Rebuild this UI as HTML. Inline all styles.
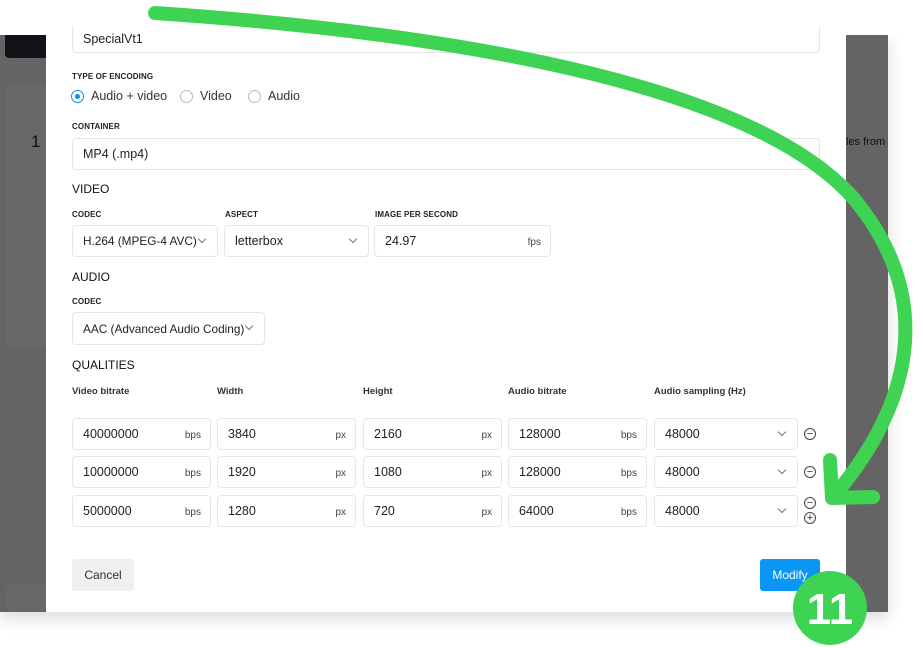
<!DOCTYPE html>
<html><head><meta charset="utf-8"><style>
*{box-sizing:border-box;margin:0;padding:0}
body{width:923px;height:648px;position:relative;overflow:hidden;background:#fff;font-family:"Liberation Sans",Arial,sans-serif;color:#1a1a1a}
.a{position:absolute}
.gray{left:0;top:35px;width:888px;height:577px;background:#646464;box-shadow:0 6px 16px rgba(0,0,0,.15)}
.modal{left:46px;top:35px;width:800px;height:577px;background:#fff}
.box{position:absolute;border:1px solid #e6e6e6;border-radius:4px;background:#fff;font-size:12.5px;color:#222;padding-left:10px;display:flex;align-items:center;white-space:nowrap}
.lbl{position:absolute;font-size:8px;font-weight:bold;color:#222;letter-spacing:.1px}
.h{position:absolute;font-size:12px;color:#111}
.col{position:absolute;font-size:9.5px;font-weight:bold;color:#333}
.u{position:absolute;right:9px;font-size:10px;color:#444;top:11px}
.chev{position:absolute;width:6px;height:6px;border-right:1px solid #777;border-bottom:1px solid #777;transform:rotate(45deg)}
.rad{position:absolute;width:13px;height:13px;border:1px solid #bbb;border-radius:50%}
.ic{position:absolute;width:12px;height:12px;border:1px solid #444;border-radius:50%;font-size:11px;line-height:10px;text-align:center;color:#333}
</style></head><body>
<div class="a gray"></div>
<div class="a" style="left:5px;top:35px;width:41px;height:23px;background:#111218;border-radius:0 0 0 4px"></div>
<div class="a" style="left:6px;top:83px;width:40px;height:265px;background:#686868;border-radius:4px"></div>
<div class="a" style="left:31px;top:132px;font-size:17px;color:#111">1</div>
<div class="a" style="left:846px;top:136px;font-size:11px;color:#111">les from</div>
<div class="a" style="left:6px;top:585px;width:40px;height:27px;background:#686868;border-radius:4px"></div>
<div class="a modal"></div>

<div class="a" style="left:0;top:0;width:923px;height:35px;background:#fff"></div>
<div class="box" style="left:72px;top:26px;width:748px;height:27px;border-top:none;border-radius:0 0 4px 4px">SpecialVt1</div>

<div class="lbl" style="left:72px;top:72px">TYPE OF ENCODING</div>
<div class="rad" style="left:71px;top:90px;border-color:#0a8ff0"><div style="position:absolute;left:3px;top:3px;width:5px;height:5px;border-radius:50%;background:#0a8ff0"></div></div>
<div class="h" style="left:91px;top:89px;font-size:12.5px;color:#333">Audio + video</div>
<div class="rad" style="left:180px;top:90px"></div>
<div class="h" style="left:200px;top:89px;font-size:12.5px;color:#333">Video</div>
<div class="rad" style="left:248px;top:90px"></div>
<div class="h" style="left:268px;top:89px;font-size:12.5px;color:#333">Audio</div>

<div class="lbl" style="left:72px;top:122px">CONTAINER</div>
<div class="box" style="left:72px;top:138px;width:748px;height:32px">MP4 (.mp4)<div class="chev" style="right:12px;top:10px"></div></div>

<div class="h" style="left:72px;top:182px">VIDEO</div>
<div class="lbl" style="left:72px;top:210px">CODEC</div>
<div class="lbl" style="left:225px;top:210px">ASPECT</div>
<div class="lbl" style="left:375px;top:210px">IMAGE PER SECOND</div>
<div class="box" style="left:72px;top:225px;width:146px;height:32px;font-size:11.8px">H.264 (MPEG-4 AVC)<div class="chev" style="right:12px;top:10px"></div></div>
<div class="box" style="left:224px;top:225px;width:145px;height:32px">letterbox<div class="chev" style="right:12px;top:10px"></div></div>
<div class="box" style="left:374px;top:225px;width:177px;height:32px">24.97<span class="u">fps</span></div>

<div class="h" style="left:72px;top:270px">AUDIO</div>
<div class="lbl" style="left:72px;top:297px">CODEC</div>
<div class="box" style="left:72px;top:312px;width:193px;height:33px;font-size:11.8px">AAC (Advanced Audio Coding)<div class="chev" style="right:12px;top:10px"></div></div>

<div class="h" style="left:72px;top:358px">QUALITIES</div>
<div class="col" style="left:72px;top:386px">Video bitrate</div>
<div class="col" style="left:217px;top:386px">Width</div>
<div class="col" style="left:363px;top:386px">Height</div>
<div class="col" style="left:508px;top:386px">Audio bitrate</div>
<div class="col" style="left:654px;top:386px">Audio sampling (Hz)</div>

<div class="box" style="left:72px;top:418px;width:139px;height:32px">40000000<span class="u">bps</span></div>
<div class="box" style="left:217px;top:418px;width:139px;height:32px">3840<span class="u">px</span></div>
<div class="box" style="left:363px;top:418px;width:139px;height:32px">2160<span class="u">px</span></div>
<div class="box" style="left:508px;top:418px;width:139px;height:32px">128000<span class="u">bps</span></div>
<div class="box" style="left:654px;top:418px;width:144px;height:32px">48000<div class="chev" style="right:12px;top:10px"></div></div>
<div class="ic" style="left:804px;top:428px">−</div>

<div class="box" style="left:72px;top:456px;width:139px;height:32px">10000000<span class="u">bps</span></div>
<div class="box" style="left:217px;top:456px;width:139px;height:32px">1920<span class="u">px</span></div>
<div class="box" style="left:363px;top:456px;width:139px;height:32px">1080<span class="u">px</span></div>
<div class="box" style="left:508px;top:456px;width:139px;height:32px">128000<span class="u">bps</span></div>
<div class="box" style="left:654px;top:456px;width:144px;height:32px">48000<div class="chev" style="right:12px;top:10px"></div></div>
<div class="ic" style="left:804px;top:466px">−</div>

<div class="box" style="left:72px;top:495px;width:139px;height:32px">5000000<span class="u">bps</span></div>
<div class="box" style="left:217px;top:495px;width:139px;height:32px">1280<span class="u">px</span></div>
<div class="box" style="left:363px;top:495px;width:139px;height:32px">720<span class="u">px</span></div>
<div class="box" style="left:508px;top:495px;width:139px;height:32px">64000<span class="u">bps</span></div>
<div class="box" style="left:654px;top:495px;width:144px;height:32px">48000<div class="chev" style="right:12px;top:10px"></div></div>
<div class="ic" style="left:804px;top:497px">−</div>
<div class="ic" style="left:804px;top:512px">+</div>

<div class="a" style="left:72px;top:559px;width:62px;height:32px;background:#efefef;border-radius:3px;font-size:12px;color:#333;text-align:center;line-height:32px">Cancel</div>
<div class="a" style="left:760px;top:559px;width:60px;height:32px;background:#0a96f5;border-radius:3px;font-size:12px;color:#fff;text-align:center;line-height:32px">Modify</div>

<svg class="a" style="left:0;top:0" width="923" height="648">
<path d="M155,13 C480,35 760,90 855,200 C945,310 900,420 832,498" fill="none" stroke="#3fd354" stroke-width="14" stroke-linecap="round"/>
<path d="M830,460 L832,498 L873,497" fill="none" stroke="#3fd354" stroke-width="14" stroke-linecap="round" stroke-linejoin="round"/>
<circle cx="830" cy="608" r="37" fill="#3fd354"/>
<text x="830" y="624" text-anchor="middle" font-family="Liberation Sans" font-weight="bold" font-size="44" fill="#fff">11</text>
</svg>
</body></html>
